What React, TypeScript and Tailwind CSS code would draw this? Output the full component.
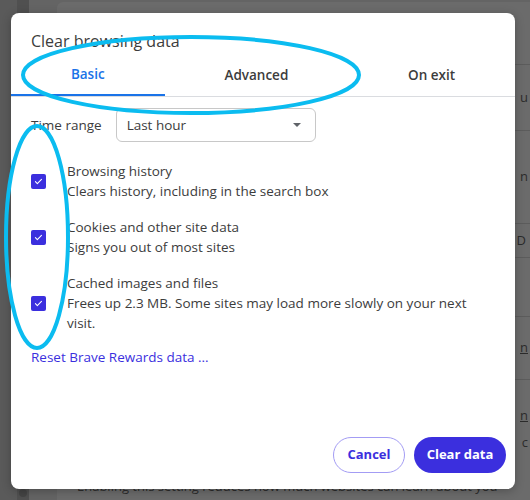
import React from 'react'

const items = [
  { title: 'Browsing history', desc: 'Clears history, including in the search box' },
  { title: 'Cookies and other site data', desc: 'Signs you out of most sites' },
  {
    title: 'Cached images and files',
    desc: 'Frees up 2.3 MB. Some sites may load more slowly on your next visit.',
  },
]

function Checkbox() {
  return (
    <span className="flex h-[15px] w-[15px] shrink-0 items-center justify-center rounded-[2px] bg-[#3b2fde]">
      <svg viewBox="0 0 16 16" className="h-[11px] w-[11px]" fill="none">
        <path d="M3.5 8.3l2.8 2.7 6-6" stroke="white" strokeWidth="1.6" strokeLinecap="round" strokeLinejoin="round" />
      </svg>
    </span>
  )
}

function Backdrop() {
  return (
    <div className="flex h-[500px] w-[530px] bg-[#5f5f5f]">
      <div className="flex w-[17px] flex-col justify-end bg-[#5a5a5a]" />
      <div className="flex w-[12px] flex-col items-center justify-end bg-[#505050] pb-[3px]">
        <span className="h-[8px] w-[8px] rounded-full bg-[#444]" />
      </div>
      <div className="flex-1 bg-[#646464] pl-[28px] pt-[2px]">
        <div className="flex h-full flex-col overflow-hidden rounded-tl-[6px] bg-[#6b6b6b] text-[13px] text-[#2b2b2b]">
          <div className="h-[63px] border-b border-[#5c5c5c]" />
          <div className="flex h-[66px] items-center justify-end border-b border-[#5c5c5c] pr-[2px]">u</div>
          <div className="flex h-[93px] items-center justify-end border-b border-[#5c5c5c] pr-[2px]">n</div>
          <div className="flex h-[34px] items-center justify-end border-b border-[#5c5c5c] pr-[4px]">D</div>
          <div className="h-[59px] border-b border-[#5c5c5c]" />
          <div className="flex h-[63px] items-center justify-end border-b border-[#5c5c5c] pr-[2px] underline">n</div>
          <div className="flex h-[45px] items-end justify-end pr-[2px] underline">n</div>
          <div className="flex h-[35px] items-center justify-end pr-[2px]">c</div>
          <div className="flex flex-1 items-end overflow-hidden whitespace-nowrap pb-[4px] pl-[20px]">
            Enabling this setting reduces how much websites can learn about you
          </div>
        </div>
      </div>
    </div>
  )
}

export default function App() {
  return (
    <div className="relative h-[500px] w-[530px] overflow-hidden font-['Open_Sans',sans-serif]">
      <Backdrop />

      <div className="absolute left-[11px] top-[13px] flex h-[476px] w-[504px] flex-col rounded-[8px] bg-white shadow-[0_2px_10px_rgba(0,0,0,0.25)]">
        <h2 className="px-[20px] pt-[17px] text-[16px] leading-[22px] text-[#3c3c3c]">Clear browsing data</h2>

        <div className="mt-[5px] flex border-b border-[#dadce0]">
          <div className="flex h-[39px] flex-auto items-center justify-center border-b-2 border-[#1a73e8] pb-[2px] text-[13.5px] font-semibold text-[#1a73e8]">
            Basic
          </div>
          <div className="flex h-[39px] flex-auto items-center justify-center pb-[2px] text-[13.5px] font-semibold text-[#3c3c3c]">
            Advanced
          </div>
          <div className="flex h-[39px] flex-auto items-center justify-center pb-[2px] text-[13.5px] font-semibold text-[#3c3c3c]">
            On exit
          </div>
        </div>

        <div className="flex flex-col px-[20px] text-[13.5px] text-[#3c3c3c]">
          <div className="mt-[11px] flex items-center gap-[14px]">
            <span>Time range</span>
            <div className="flex h-[34px] w-[200px] items-center justify-between rounded-[6px] border border-[#c8c8c8] pl-[10px] pr-[14px]">
              <span>Last hour</span>
              <span className="h-0 w-0 border-x-[4px] border-t-[4px] border-x-transparent border-t-[#5f6368]" />
            </div>
          </div>

          <div className="mt-[19px] flex flex-col gap-[16px]">
            {items.map((it) => (
              <div key={it.title} className="flex items-center gap-[21px]">
                <Checkbox />
                <div className="flex flex-col leading-[20px]">
                  <span>{it.title}</span>
                  <span className="w-[410px]">{it.desc}</span>
                </div>
              </div>
            ))}
          </div>

          <a className="mt-[14px] leading-[20px] text-[#3b2fde]">Reset Brave Rewards data ...</a>
        </div>

        <div className="mt-auto flex justify-end gap-[9px] px-[9px] pb-[16px]">
          <button className="h-[36px] w-[72px] rounded-full border border-[#a39cf4] text-[13px] font-bold text-[#3b2fde]">
            Cancel
          </button>
          <button className="h-[36px] w-[92px] rounded-full bg-[#3b2fde] text-[13px] font-bold text-white">
            Clear data
          </button>
        </div>
      </div>

      <svg className="pointer-events-none absolute left-0 top-0" width="530" height="500" fill="none">
        <ellipse cx="191" cy="75" rx="168" ry="38" stroke="#0bbcf0" strokeWidth="4" />
        <ellipse cx="37" cy="237" rx="31" ry="111" stroke="#0bbcf0" strokeWidth="4" />
      </svg>
    </div>
  )
}
